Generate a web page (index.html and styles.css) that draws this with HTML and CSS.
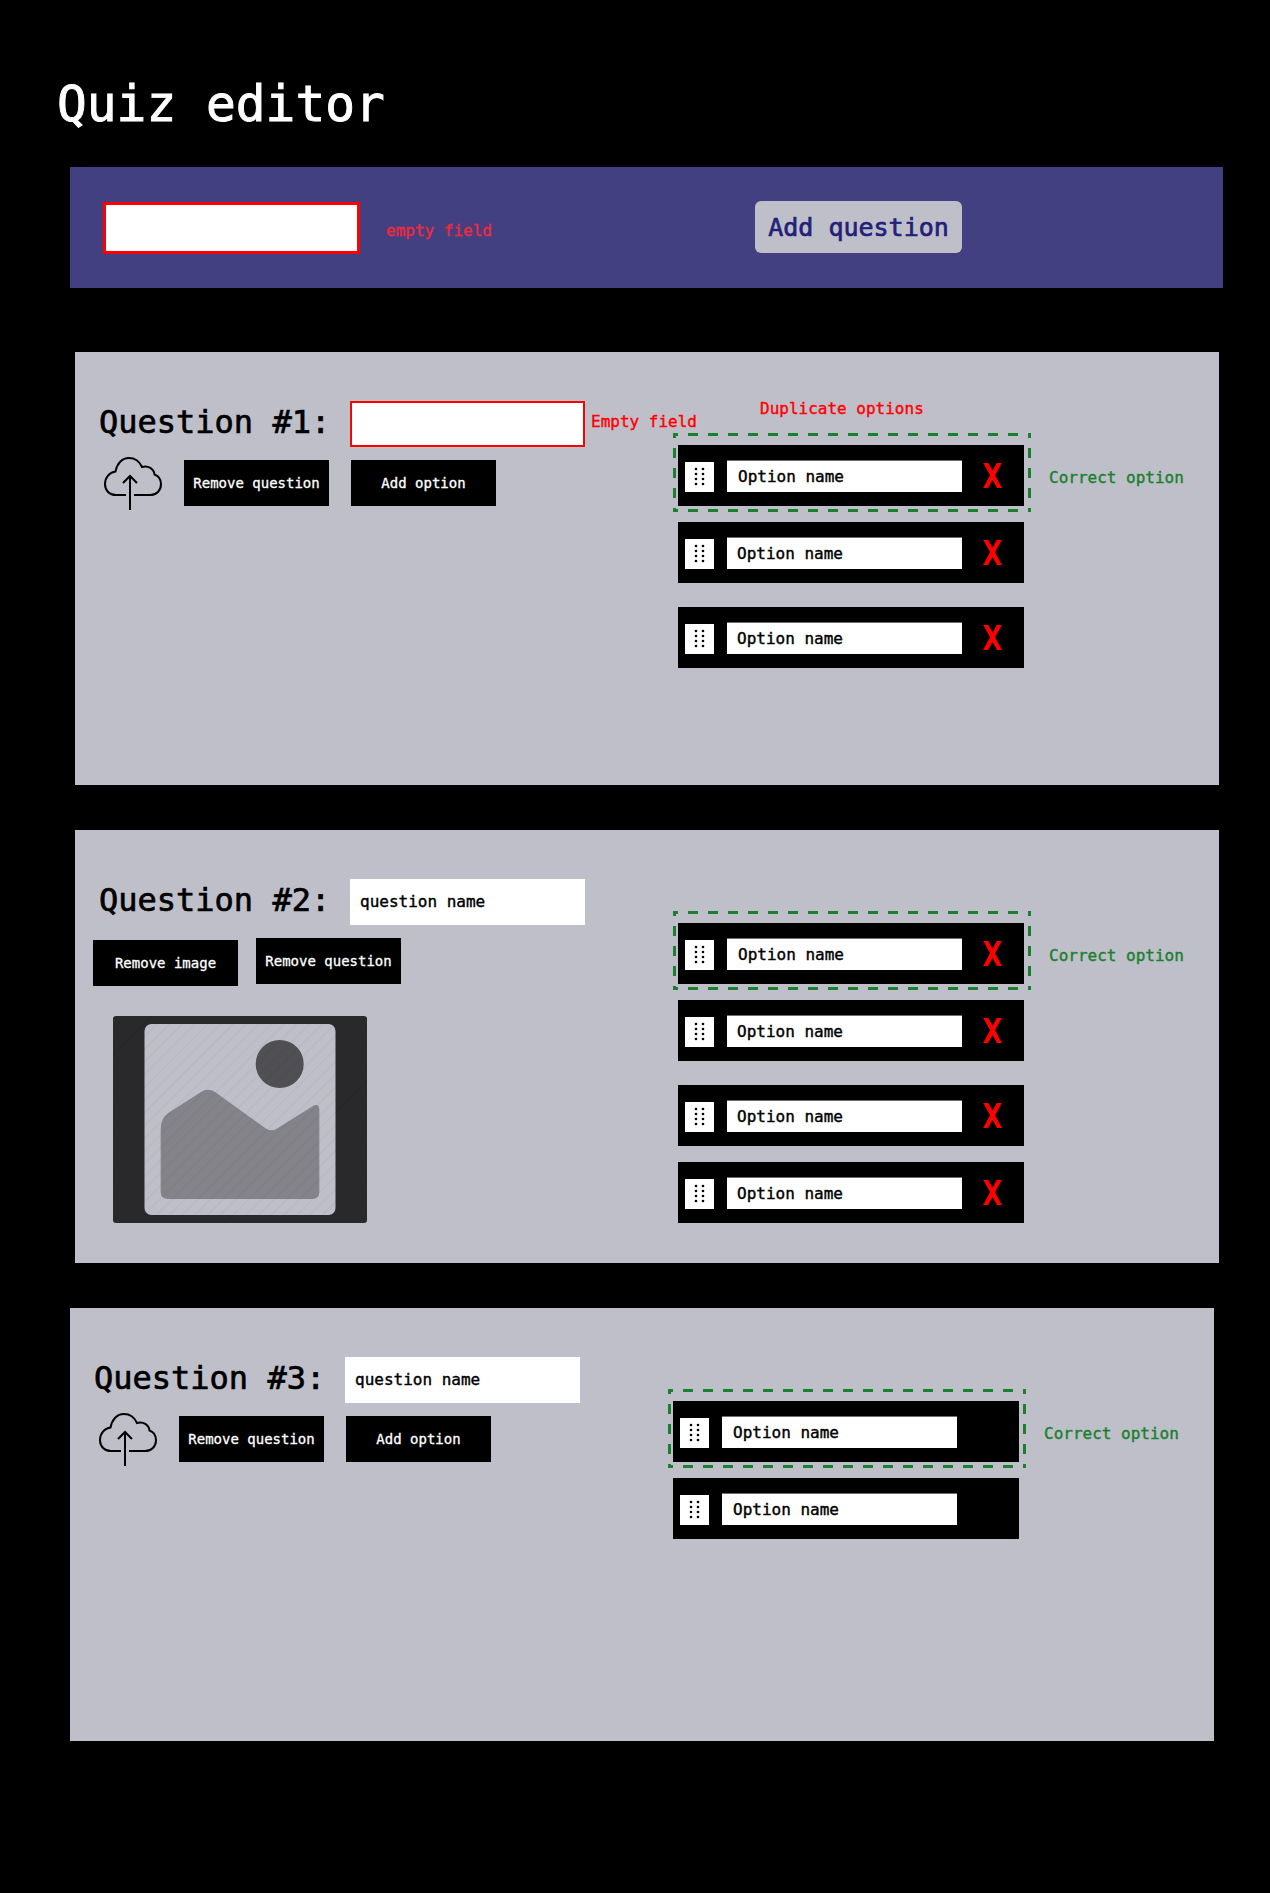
FILE: index.html

```html
<!DOCTYPE html>
<html lang="en">
<head>
  <meta charset="UTF-8">
  <meta name="viewport" content="width=device-width, initial-scale=1.0">
  <title>Quiz editor</title>
  <link rel="stylesheet" href="styles.css">
</head>
<body>

<h1 class="page-title">Quiz editor</h1>

<!-- Quiz name bar -->
<div class="quiz-bar">
  <div class="quiz-name-field"></div>
  <span class="quiz-name-error">empty field</span>
  <button class="add-question">Add question</button>
</div>

<!-- Question 1 -->
<section class="question">
  <div class="question-main">
    <div class="question-title-row">
      <h2 class="question-title">Question #1:</h2>
      <div class="question-field question-field-error"></div>
      <span class="field-error">Empty field</span>
    </div>
    <div class="question-actions">
      <svg class="upload-icon" viewBox="0 0 58 53" aria-hidden="true"><path d="M22 38H12C5.500 38 1 33.500 1 27C1 20.500 5.500 15.500 11.500 14.500C13 6.500 18 1 25 1C31 1 35.500 4.500 38 10C44 8 50 12 50.500 17.500C54.500 19 57 22.500 57 27C57 33.500 52.500 38 46 38H30M26 53V19M19 26L26 19L33 26"/></svg>
      <button class="action-button">Remove question</button>
      <button class="action-button">Add option</button>
    </div>
  </div>
  <div class="question-options">
    <p class="options-note">Duplicate options</p>
    <div class="correct-line">
      <div class="correct-box">
        <div class="option-row">
          <div class="option-handle"><svg viewBox="0 0 29 30" aria-hidden="true"><use href="#grip"/></svg></div>
          <div class="option-field option-field-wide">Option name</div>
          <button class="option-remove">X</button>
        </div>
      </div>
      <span class="correct-label">Correct option</span>
    </div>
    <div class="option-row option-row-plain">
      <div class="option-handle"><svg viewBox="0 0 29 30" aria-hidden="true"><use href="#grip"/></svg></div>
      <div class="option-field">Option name</div>
      <button class="option-remove">X</button>
    </div>
    <div class="option-row option-row-plain option-row-far">
      <div class="option-handle"><svg viewBox="0 0 29 30" aria-hidden="true"><use href="#grip"/></svg></div>
      <div class="option-field">Option name</div>
      <button class="option-remove">X</button>
    </div>
  </div>
</section>

<!-- Question 2 -->
<section class="question">
  <div class="question-main">
    <div class="question-title-row">
      <h2 class="question-title">Question #2:</h2>
      <div class="question-field">question name</div>
    </div>
    <div class="question-actions question-actions-image">
      <button class="action-button action-button-low">Remove image</button>
      <button class="action-button">Remove question</button>
    </div>
    <svg class="question-image" viewBox="0 0 254 207" aria-hidden="true">
      <defs>
        <pattern id="stripes" width="9" height="9" patternUnits="userSpaceOnUse" patternTransform="rotate(45)">
          <line x1="0" y1="0" x2="0" y2="9" stroke="#000" stroke-opacity="0.04" stroke-width="2.500"/>
        </pattern>
      </defs>
      <rect width="254" height="207" rx="3" fill="#29292b"/>
      <rect x="31.500" y="8" width="191" height="191" rx="7" fill="#bfbfc9"/>
      <circle cx="166.700" cy="48" r="24" fill="#505054"/>
      <path d="M47.700 113Q47.700 102 56 96.500L88 76Q95 71.500 102 76L152 112Q158.500 116.500 165 112L200 90Q206.300 87 206.300 94V176Q206.300 183 199 183H55Q47.700 183 47.700 176Z" fill="#838389"/>
      <rect width="254" height="207" rx="3" fill="url(#stripes)"/>
    </svg>
  </div>
  <div class="question-options">
    <p class="options-note"></p>
    <div class="correct-line">
      <div class="correct-box">
        <div class="option-row">
          <div class="option-handle"><svg viewBox="0 0 29 30" aria-hidden="true"><use href="#grip"/></svg></div>
          <div class="option-field option-field-wide">Option name</div>
          <button class="option-remove">X</button>
        </div>
      </div>
      <span class="correct-label">Correct option</span>
    </div>
    <div class="option-row option-row-plain">
      <div class="option-handle"><svg viewBox="0 0 29 30" aria-hidden="true"><use href="#grip"/></svg></div>
      <div class="option-field">Option name</div>
      <button class="option-remove">X</button>
    </div>
    <div class="option-row option-row-plain option-row-far">
      <div class="option-handle"><svg viewBox="0 0 29 30" aria-hidden="true"><use href="#grip"/></svg></div>
      <div class="option-field">Option name</div>
      <button class="option-remove">X</button>
    </div>
    <div class="option-row option-row-plain option-row-near">
      <div class="option-handle"><svg viewBox="0 0 29 30" aria-hidden="true"><use href="#grip"/></svg></div>
      <div class="option-field">Option name</div>
      <button class="option-remove">X</button>
    </div>
  </div>
</section>

<!-- Question 3 -->
<section class="question question-shifted">
  <div class="question-main">
    <div class="question-title-row">
      <h2 class="question-title">Question #3:</h2>
      <div class="question-field">question name</div>
    </div>
    <div class="question-actions">
      <svg class="upload-icon" viewBox="0 0 58 53" aria-hidden="true"><path d="M22 38H12C5.500 38 1 33.500 1 27C1 20.500 5.500 15.500 11.500 14.500C13 6.500 18 1 25 1C31 1 35.500 4.500 38 10C44 8 50 12 50.500 17.500C54.500 19 57 22.500 57 27C57 33.500 52.500 38 46 38H30M26 53V19M19 26L26 19L33 26"/></svg>
      <button class="action-button">Remove question</button>
      <button class="action-button">Add option</button>
    </div>
  </div>
  <div class="question-options">
    <p class="options-note"></p>
    <div class="correct-line">
      <div class="correct-box">
        <div class="option-row">
          <div class="option-handle"><svg viewBox="0 0 29 30" aria-hidden="true"><use href="#grip"/></svg></div>
          <div class="option-field option-field-wide">Option name</div>
        </div>
      </div>
      <span class="correct-label">Correct option</span>
    </div>
    <div class="option-row option-row-plain">
      <div class="option-handle"><svg viewBox="0 0 29 30" aria-hidden="true"><use href="#grip"/></svg></div>
      <div class="option-field option-field-wide">Option name</div>
    </div>
  </div>
</section>

<!-- Shared drag handle dots -->
<svg class="svg-defs" aria-hidden="true">
  <symbol id="grip" viewBox="0 0 29 30">
    <circle cx="11" cy="7" r="1.300"/><circle cx="18" cy="7" r="1.300"/>
    <circle cx="11" cy="12" r="1.300"/><circle cx="18" cy="12" r="1.300"/>
    <circle cx="11" cy="17" r="1.300"/><circle cx="18" cy="17" r="1.300"/>
    <circle cx="11" cy="22" r="1.300"/><circle cx="18" cy="22" r="1.300"/>
  </symbol>
</svg>

</body>
</html>
```

FILE: styles.css

```css
body {
  margin: 0;
  padding-bottom: 152px;
  background: black;
  color: black;
  font-family: "DejaVu Sans Mono", "Liberation Mono", monospace;
}
button {
  font-family: inherit;
  cursor: pointer;
}
.page-title {
  margin: 74px 0 33px 57px;
  color: white;
  font-size: 49.5px;
  font-weight: normal;
  line-height: 60px;
  -webkit-text-stroke: 0.9px white;
}
.svg-defs {
  display: none;
}

/* quiz name bar */
.quiz-bar {
  display: flex;
  align-items: center;
  box-sizing: border-box;
  width: 1153px;
  height: 121px;
  margin-left: 70px;
  padding-left: 33px;
  background: #434082;
}
.quiz-name-field {
  box-sizing: border-box;
  width: 257px;
  height: 52px;
  margin-top: 1px;
  background: white;
  border: 3px solid red;
}
.quiz-name-error {
  margin: 5px 0 0 26px;
  color: #ee2a3a;
  font-size: 16px;
  -webkit-text-stroke: 0.4px #ee2a3a;
}
.add-question {
  box-sizing: border-box;
  width: 207px;
  height: 52px;
  margin: 0 261px 1px auto;
  padding: 0;
  background: #bfbfc9;
  border: none;
  border-radius: 6px;
  color: #231f7a;
  font-size: 25px;
  -webkit-text-stroke: 0.7px #231f7a;
}

/* question cards */
.question {
  display: flex;
  box-sizing: border-box;
  width: 1144px;
  height: 433px;
  margin: 64px 0 -19px 75px;
  background: #bfbfc9;
}
.question-shifted {
  margin-left: 70px;
}
.question-main {
  box-sizing: border-box;
  flex: none;
  width: 598px;
  padding: 49px 0 0 24px;
}
.question-title-row {
  display: flex;
  align-items: center;
  height: 46px;
  white-space: nowrap;
}
.question-title {
  flex: none;
  width: 251px;
  margin: 0 0 4px 0;
  font-size: 32px;
  font-weight: normal;
  -webkit-text-stroke: 0.7px black;
}
.question-field {
  display: flex;
  align-items: center;
  flex: none;
  box-sizing: border-box;
  width: 235px;
  height: 46px;
  padding: 0 0 2px 10px;
  background: white;
  font-size: 16px;
  -webkit-text-stroke: 0.4px black;
}
.question-field-error {
  border: 2px solid red;
}
.field-error {
  margin: 0 0 5px 6px;
  color: red;
  font-size: 16px;
  -webkit-text-stroke: 0.4px red;
}
.question-actions {
  display: flex;
  align-items: flex-start;
  gap: 22px;
  margin-top: 13px;
  padding-left: 5px;
}
.question-actions-image {
  gap: 18px;
  margin-left: -11px;
}
.upload-icon {
  flex: none;
  width: 58px;
  height: 53px;
  margin-top: -3px;
  fill: none;
  stroke: black;
  stroke-width: 2;
}
.action-button {
  flex: none;
  box-sizing: border-box;
  width: 145px;
  height: 46px;
  padding: 0;
  background: black;
  border: none;
  color: white;
  font-size: 14px;
  -webkit-text-stroke: 0.3px white;
}
.action-button-low {
  margin-top: 2px;
}
.question-image {
  display: block;
  width: 254px;
  height: 207px;
  margin: 30px 0 0 14px;
}

/* option list */
.question-options {
  flex: none;
  padding-top: 46px;
}
.options-note {
  height: 35px;
  margin: 0 0 0 87px;
  color: red;
  font-size: 16px;
  line-height: 21px;
  -webkit-text-stroke: 0.4px red;
}
.correct-line {
  display: flex;
  align-items: center;
}
.correct-box {
  box-sizing: border-box;
  width: 358px;
  height: 79px;
  padding: 12px 7px 6px 5px;
  background:
    linear-gradient(90deg, #1a8030 50%, transparent 50%) 15px 0 / 20px 3px repeat-x,
    linear-gradient(90deg, #1a8030 50%, transparent 50%) 15px 100% / 20px 3px repeat-x,
    linear-gradient(#1a8030 50%, transparent 50%) 0 15px / 3px 20px repeat-y,
    linear-gradient(#1a8030 50%, transparent 50%) 100% 15px / 3px 20px repeat-y;
}
.correct-label {
  margin: 9px 0 0 18px;
  color: #1a8030;
  font-size: 16px;
  -webkit-text-stroke: 0.4px #1a8030;
}
.option-row {
  display: flex;
  align-items: flex-start;
  box-sizing: border-box;
  width: 346px;
  height: 61px;
  background: black;
}
.option-row-plain {
  margin: 10px 0 0 5px;
}
.option-row-far {
  margin-top: 24px;
}
.option-row-near {
  margin-top: 16px;
}
.option-handle {
  flex: none;
  width: 29px;
  height: 30px;
  margin: 17px 0 0 7px;
  background: white;
}
.option-handle svg {
  display: block;
  width: 29px;
  height: 30px;
}
.option-field {
  display: flex;
  align-items: center;
  flex: none;
  box-sizing: border-box;
  width: 235px;
  height: 32px;
  margin: 15px 0 0 13px;
  padding-left: 10px;
  background: white;
  border-top: 1px solid #6e6e6e;
  font-size: 16px;
  -webkit-text-stroke: 0.4px black;
}
.option-field-wide {
  padding-left: 11px;
}
.option-remove {
  flex: none;
  width: 20px;
  height: 34px;
  margin: 14px 0 0 20px;
  padding: 0;
  background: none;
  border: none;
  color: red;
  font-size: 34px;
  font-weight: bold;
  line-height: 34px;
  transform: scaleX(0.95);
}
```
